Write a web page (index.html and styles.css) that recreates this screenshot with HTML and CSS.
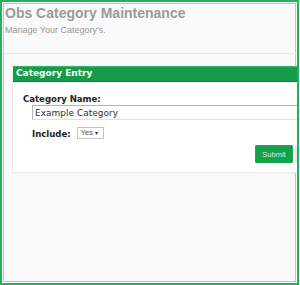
FILE: index.html
```html
<!DOCTYPE html>
<html lang="en">
<head>
  <meta charset="UTF-8">
  <title>Obs Category Maintenance</title>
  <link rel="stylesheet" href="styles.css">
</head>
<body>
  <div class="cornice">
    <div class="testata">
      <h1>Obs Category Maintenance</h1>
      <p>Manage Your Category's.</p>
    </div>

    <div class="pannello">
      <div class="pannello-titolo">Category Entry</div>
      <div class="pannello-corpo">
        <label class="etichetta">Category Name:</label>
        <input type="text" class="campo" value="Example Category">
        <div class="riga-include">
          <label class="etichetta">Include:</label>
          <span class="scelta">Yes <span class="freccia">&#9662;</span></span>
        </div>
        <div class="azioni">
          <button class="invia">Submit</button>
          <button class="annulla">Cancel</button>
        </div>
      </div>
    </div>
  </div>
</body>
</html>
```

FILE: styles.css
```css
* {
  box-sizing: border-box;
  margin: 0;
  padding: 0;
}

body {
  width: 300px;
  height: 285px;
  overflow: hidden;
  background: #fff;
  font-family: 'Liberation Sans', Arial, sans-serif;
}

.cornice {
  width: 299px;
  height: 285px;
  border: 2px solid #21b35c;
  box-shadow: inset 0 0 0 1px #fff, inset 0 0 0 2px #9bdcb4;
  background: #fafafa;
  overflow: hidden;
}

.testata {
  padding: 3px 3px 0;
  height: 52px;
  border-bottom: 1px solid #e8e8e8;
}

.testata h1 {
  font-size: 14px;
  font-weight: bold;
  color: #9a9a9a;
  line-height: 16px;
}

.testata p {
  font-size: 9px;
  line-height: 11px;
  color: #999;
  margin-top: 4px;
}

.pannello {
  margin: 12px 0 0 11px;
  width: 320px;
  background: #fff;
  box-shadow: 0 0 0 1px #ececec, 0 1px 2px rgba(0,0,0,0.05);
}

.pannello-titolo {
  background: #159c4a;
  color: #fff;
  font-family: 'DejaVu Sans', Verdana, sans-serif;
  font-weight: bold;
  font-size: 9px;
  line-height: 15px;
  padding-left: 3px;
  border-bottom: 1px solid #0f7d3b;
  box-shadow: inset 0 1px 0 #3bb66a;
}

.pannello-corpo {
  padding: 11px 0 9px 10px;
}

.etichetta {
  display: block;
  font-family: 'DejaVu Sans Condensed', 'DejaVu Sans', Tahoma, sans-serif;
  font-weight: bold;
  font-size: 9.5px;
  line-height: 11px;
  color: #222;
}

.campo {
  display: block;
  width: 280px;
  height: 15px;
  margin: 1px 0 0 9px;
  border: 1px solid #b5b5b5;
  border-bottom-color: #e0e0e0;
  border-right-color: #e0e0e0;
  font-family: 'DejaVu Sans', Verdana, sans-serif;
  font-size: 9px;
  color: #333;
  padding-left: 2px;
}

.riga-include {
  display: flex;
  align-items: center;
  gap: 6px;
  height: 12px;
  margin: 7px 0 0 9px;
}

.scelta {
  width: 27px;
  height: 12px;
  border: 1px solid #c4c4c4;
  font-size: 7.5px;
  line-height: 10px;
  color: #555;
  padding-left: 3px;
}

.freccia {
  font-size: 6px;
  color: #333;
}

.azioni {
  display: flex;
  gap: 2px;
  margin: 6px 0 0 232px;
}

.invia,
.annulla {
  border: none;
  border-radius: 2px;
  font-family: 'Liberation Sans', Arial, sans-serif;
  font-size: 7.5px;
  width: 38px;
  height: 18px;
}

.invia {
  background: #15a04b;
  color: #d6efdf;
  box-shadow: inset 0 0 0 1px #1aab54;
}

.annulla {
  background: #e6e6e6;
  color: #555;
}
```
